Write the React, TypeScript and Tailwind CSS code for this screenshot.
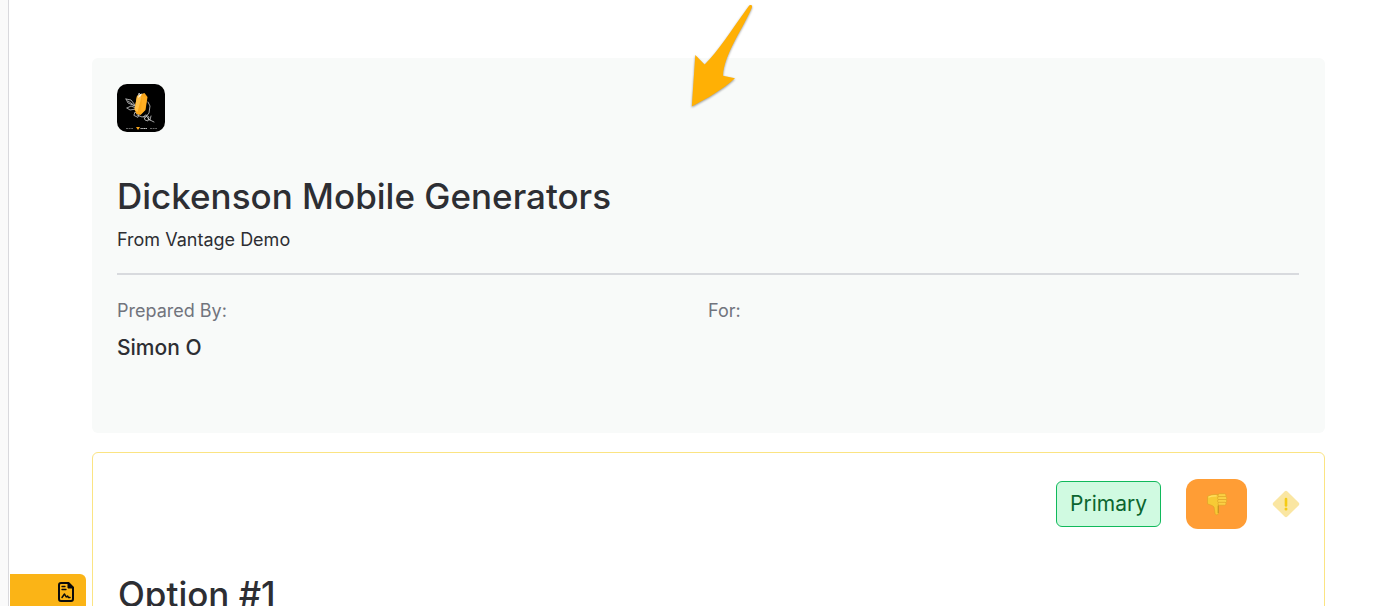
import React from "react";

const BrandLogo: React.FC = () => (
  <svg viewBox="0 0 48 48" className="block h-12 w-12 rounded-[10px] bg-black" aria-hidden="true">
    <g fill="none" stroke="#c9c9c9" strokeWidth="0.8" strokeLinecap="round" strokeLinejoin="round">
      <path d="M9 15l5 1 4 5M9 15l2 4 7 3M11 17l7 5M10 24l4-2 5 2M10 24l3 2 6-1" />
      <path d="M21 12l1-3 2 2 2-1M31 18l2 4-1 7-4 5M20 31l5 2 4-1 4 4" />
      <path d="M17 31l1-3 4 3-1 2zM27 33l1 3 3 1 1-4-3-2zM31 35l6 3M34 32l-1 4" />
    </g>
    <path d="M22.5 11l5-2 3 4-2 13-5 5-4-1-2-5 2.500-13z" fill="#f9a61a" />
    <path d="M22.500 11l2 2-4 15-3-2 2.500-14z" fill="#ffc04a" />
    <path d="M25 12l5 1-2 13-4 4z" fill="#ffad22" />
    <path d="M22 10.500l3-1-1 2.500-3 2z" fill="#fff2d4" />
    <path d="M19 43h4l-2 3z" fill="#f9a61a" />
    <path d="M23.500 44.500h6.500" stroke="#ccc" strokeWidth="1.200" strokeDasharray="1.3 .4" />
    <path d="M9 44.500h7M33 44.500h7" stroke="#aaa" strokeWidth=".6" strokeDasharray="2 .6" />
  </svg>
);

const ThumbsDown: React.FC = () => (
  <svg viewBox="0 0 22 24" className="h-6 w-[22px]" aria-hidden="true">
    <path
      d="M1.5 4.500C4 2.500 8 2.300 12 2.500l1 9-.5 2-.2 8c-.1 1.800-2.800 1.900-3.200.1L8 15c-1.300-1.700-4.500-2.200-6.500-3.200z"
      fill="#f7ca35"
      stroke="#dba126"
      strokeWidth=".6"
    />
    <path d="M2.500 5.200c2.500-1.200 5-1.500 8-1.300" stroke="#ffe066" strokeWidth="1.200" fill="none" />
    <g fill="#fbd044" stroke="#dba126" strokeWidth=".6">
      <rect x="12" y="1.700" width="8" height="3" rx="1.500" />
      <rect x="11.500" y="4.600" width="9.300" height="3" rx="1.500" />
      <rect x="11.500" y="7.500" width="9.300" height="3" rx="1.500" />
      <rect x="12" y="10.300" width="8" height="2.900" rx="1.400" />
    </g>
    <path d="M12.200 13.500v7.500" stroke="#b9861a" strokeWidth=".8" />
  </svg>
);

const WarningDiamond: React.FC = () => (
  <svg viewBox="0 0 28 28" className="h-7 w-7" role="img" aria-label="Warning">
    <path d="M12.6 1.400a2 2 0 0 1 2.800 0l11.200 11.200a2 2 0 0 1 0 2.800L15.400 26.600a2 2 0 0 1-2.800 0L1.400 15.400a2 2 0 0 1 0-2.800z" fill="#fae6a2" />
    <path d="M14 9v6.500" stroke="#f5cb14" strokeWidth="2.600" strokeLinecap="round" />
    <circle cx="14" cy="19" r="1.500" fill="#f5cb14" />
  </svg>
);

const SignedFile: React.FC = () => (
  <svg
    viewBox="0 0 18 22"
    className="h-[22px] w-[18px]"
    fill="none"
    stroke="#0b0b0b"
    strokeWidth="2"
    strokeLinejoin="round"
    strokeLinecap="round"
    aria-hidden="true"
  >
    <path d="M4 2h7.500L16 6.500V18a2 2 0 0 1-2 2H4a2 2 0 0 1-2-2V4a2 2 0 0 1 2-2z" />
    <path d="M11 1.500V7h5.500z" fill="#0b0b0b" strokeWidth="1" />
    <path d="M5 5.500h3M5 8.500h4" strokeWidth="1.300" />
    <path d="M5 16.500l2.500-3.500 1.700 3 1.300-1 1 1.500H13" strokeWidth="1.500" />
  </svg>
);

const Pointer: React.FC = () => (
  <svg
    viewBox="0 0 90 115"
    className="pointer-events-none absolute left-1/2 top-0 -ml-[9px] h-[115px] w-[90px] drop-shadow-[0_1px_1px_rgba(0,0,0,0.4)]"
    aria-hidden="true"
  >
    <path d="M11.800 106.500L15.300 55l9.300 9.500C38 52 52 29 68.500 6.500c1.700-2.500 4.500-1.500 3.300 1.300C64 27 44 54 43 75.700L55 78.300C42 90 28 98 11.800 106.500z" fill="#ffb005" />
  </svg>
);

const Detail: React.FC<{ label: string; value?: string }> = ({ label, value }) => (
  <div>
    <dt className="text-lg leading-6 text-[#71747d]">{label}</dt>
    <dd className="mt-[11px] h-7 text-[21px] leading-7 font-medium">{value}</dd>
  </div>
);

const App: React.FC = () => (
  <div className="relative flex h-screen overflow-hidden bg-white font-['Inter',sans-serif] text-[#2d2e33]">
    <div className="w-[9px] shrink-0 border-r border-[#d9d9dd] bg-[#fafafa]" />

    <aside className="flex w-[83px] shrink-0 flex-col justify-end pl-px">
      <button
        type="button"
        aria-label="Open document"
        className="flex h-8 w-[76px] items-end justify-end rounded-tr-md bg-[#fbb416] pr-[11px] pb-[3px]"
      >
        <SignedFile />
      </button>
    </aside>

    <main className="mr-[53px] min-w-0 flex-1 pt-[58px]">
      <header className="h-[375px] rounded-md bg-[#f8faf9] pt-[26px] pr-[26px] pl-[25px]">
        <BrandLogo />
        <h1 className="mt-11 text-[35px] leading-10 font-medium">Dickenson Mobile Generators</h1>
        <p className="mt-3 text-lg leading-6">From Vantage Demo</p>
        <hr className="mt-[21px] border-t-2 border-[#d8dade]" />
        <dl className="mt-6 grid grid-cols-2">
          <Detail label="Prepared By:" value="Simon O" />
          <Detail label="For:" />
        </dl>
      </header>

      <section className="mt-[19px] rounded-md border border-[#fbe483] pt-[26px] pr-6 pb-16 pl-[25px]">
        <div className="flex items-center justify-end gap-[25px]">
          <span className="rounded-md border border-[#10b95b] bg-[#d0fae1] px-[13px] py-2 text-[21px] leading-7 text-[#0b652f]">
            Primary
          </span>
          <button
            type="button"
            aria-label="Reject option"
            className="flex h-[50px] w-[61px] items-center justify-center rounded-xl bg-[#ff9d35]"
          >
            <ThumbsDown />
          </button>
          <WarningDiamond />
        </div>
        <h2 className="mt-[45px] text-[35px] leading-10 font-medium">Option #1</h2>
      </section>
    </main>

    <Pointer />
  </div>
);

export default App;
